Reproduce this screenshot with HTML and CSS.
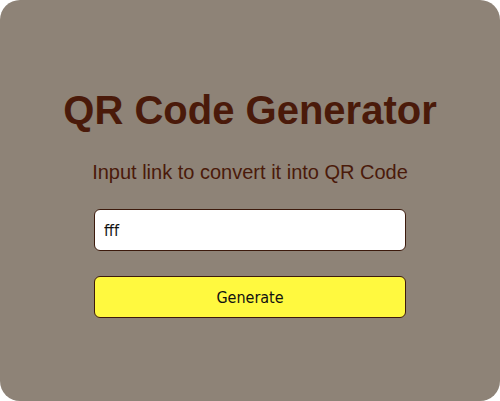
FILE: index.html
```html
<!DOCTYPE html>
<html lang="en">
<head>
<meta charset="utf-8">
<title>QR Code Generator</title>
<link rel="stylesheet" href="styles.css">
</head>
<body>
<div class="card">
  <h1 class="title">QR Code Generator</h1>
  <p class="subtitle">Input link to convert it into QR Code</p>
  <input class="field" type="text" value="fff">
  <button class="btn" type="button">Generate</button>
</div>
</body>
</html>
```

FILE: styles.css
```css
html, body {
  margin: 0;
  padding: 0;
  background: #ffffff;
}
.card {
  box-sizing: border-box;
  width: 500px;
  height: 401px;
  background: #8e8377;
  border-radius: 20px;
  display: flex;
  flex-direction: column;
  align-items: center;
  padding-top: 87px;
}
.title {
  margin: 0;
  font-family: "Liberation Sans", Arial, sans-serif;
  font-weight: bold;
  font-size: 40px;
  line-height: 46px;
  color: #4a1a0a;
}
.subtitle {
  margin: 28px 0 0;
  font-family: "Liberation Sans", Arial, sans-serif;
  font-size: 20px;
  line-height: 23px;
  color: #4a1a0a;
}
.field, .btn {
  box-sizing: border-box;
  width: 312px;
  height: 42px;
  border: 1px solid #3c1a0c;
  border-radius: 6px;
  font-family: "DejaVu Sans Condensed", "DejaVu Sans", sans-serif;
  font-stretch: semi-condensed;
  font-size: 16px;
  color: #111111;
  outline: none;
}
.field {
  margin-top: 25px;
  background: #ffffff;
  padding: 0 9px;
}
.btn {
  margin-top: 25px;
  background: #fff93f;
  padding: 0;
}
```
